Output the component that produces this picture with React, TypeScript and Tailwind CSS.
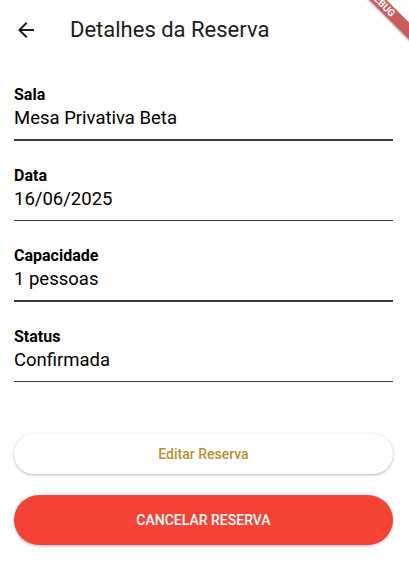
import { FC } from "react";

const Field: FC<{ label: string; value: string }> = ({ label, value }) => {
  return (
    <div className="flex flex-col">
      <span className="text-[16px] leading-[19px] font-bold text-black">{label}</span>
      <span className="mt-[3px] text-[18.5px] leading-[22px] text-black">{value}</span>
      <div className="mt-[10px] h-[1.5px] bg-[#3a3a3a]" />
    </div>
  );
};

const App: FC = () => {
  const fields = [
    { label: "Sala", value: "Mesa Privativa Beta" },
    { label: "Data", value: "16/06/2025" },
    { label: "Capacidade", value: "1 pessoas" },
    { label: "Status", value: "Confirmada" },
  ];

  return (
    <div
      className="relative w-[409px] h-[564px] overflow-hidden bg-white"
      style={{ fontFamily: "Roboto, 'Noto Sans', sans-serif" }}
    >
      {/* debug banner */}
      <div className="absolute top-[-2px] left-[322px] w-[120px] h-[12px] rotate-45 bg-[#b71c1c]/[0.72] flex items-center justify-center shadow-[0_1px_2px_rgba(0,0,0,0.3)]">
        <span className="text-[10px] font-bold text-white leading-none">DEBUG</span>
      </div>

      <header className="h-[60px] flex items-center">
        <button className="w-[52px] h-[56px] flex items-center justify-center">
          <svg width="24" height="24" viewBox="0 0 24 24" fill="#1d1b20">
            <path d="M20 11H7.83l5.59-5.59L12 4l-8 8 8 8 1.41-1.41L7.83 13H20v-2z" />
          </svg>
        </button>
        <h1 className="ml-[18px] text-[22px] leading-none text-[#1d1b20]">Detalhes da Reserva</h1>
      </header>

      <main className="pl-[14px] pr-[16px] pt-[25px] flex flex-col gap-[25px]">
        {fields.map((f) => (
          <Field key={f.label} label={f.label} value={f.value} />
        ))}

        <div className="mt-[27px] flex flex-col gap-[21px]">
          <button className="h-[40px] rounded-full bg-white shadow-[0_1px_3px_rgba(0,0,0,0.3)] text-[14px] font-medium text-[#b8902f]">
            Editar Reserva
          </button>
          <button className="h-[50px] rounded-full bg-[#f44336] shadow-[0_1px_3px_rgba(0,0,0,0.25)] text-[14px] font-medium text-white">
            CANCELAR RESERVA
          </button>
        </div>
      </main>
    </div>
  );
};

export default App;
